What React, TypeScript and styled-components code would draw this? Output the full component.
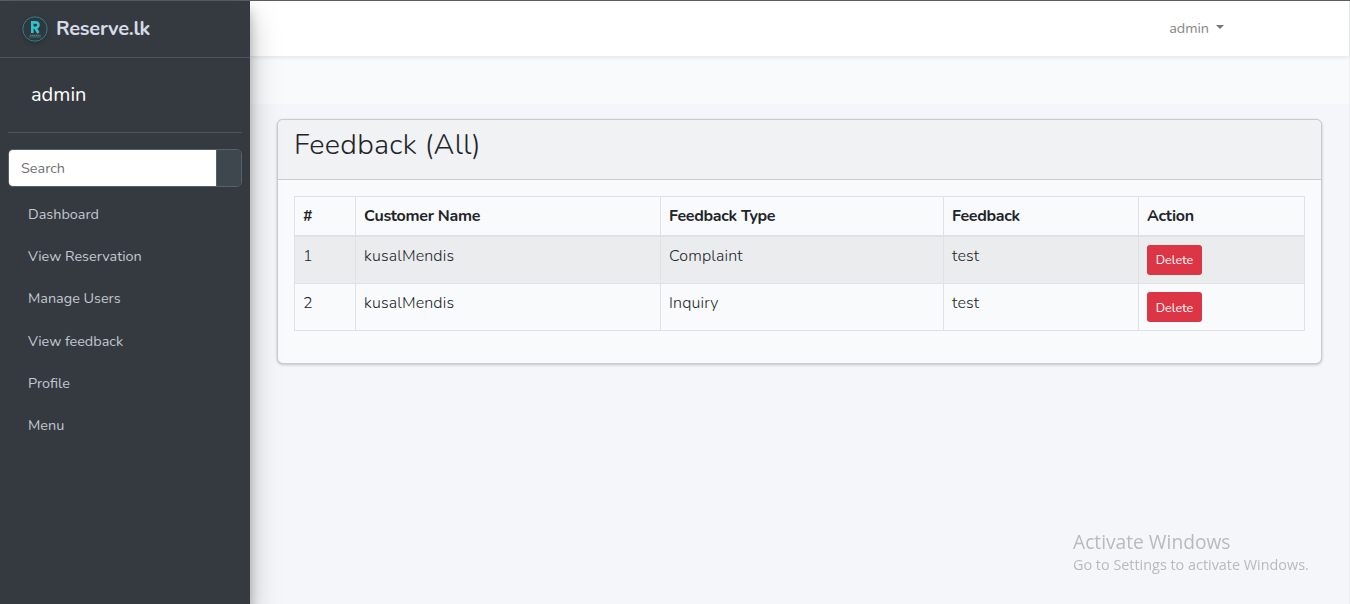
import React from "react";
import styled, { createGlobalStyle } from "styled-components";

const GlobalStyle = createGlobalStyle`
  *, *::before, *::after { box-sizing: border-box; }
  body {
    margin: 0;
    overflow: hidden;
    font-family: Nunito, Lato, "Open Sans", sans-serif;
    font-size: 16px;
    line-height: 24px;
    color: #212529;
    background: #f4f6f9;
  }
`;

const Page = styled.div`
  display: flex;
  height: 604px;
  border-top: 1px solid #5d5d5d;
`;

const Sidebar = styled.aside`
  position: relative;
  z-index: 2;
  flex: 0 0 250px;
  background: #353a40;
  box-shadow: 0 14px 28px rgba(0, 0, 0, 0.25), 0 10px 10px rgba(0, 0, 0, 0.22);
`;

const Brand = styled.div`
  display: flex;
  align-items: center;
  height: 57px;
  padding: 0 0 1px 22px;
  border-bottom: 1px solid #4d5359;
`;

const BrandName = styled.span`
  margin-left: 8px;
  font-size: 20px;
  font-weight: 700;
  letter-spacing: -0.25px;
  color: #d7dbe8;
`;

const Logo = styled.svg`
  width: 26px;
  height: 28px;
  filter: drop-shadow(0 2px 2px rgba(0, 0, 0, 0.2));
`;

const UserPanel = styled.div`
  margin: 0 8px 16px;
  padding: 22px 0 0 23px;
  height: 75px;
  border-bottom: 1px solid #4f555b;
  color: #fff;
  font-size: 20px;
  line-height: 30px;
`;

const SearchGroup = styled.div`
  display: flex;
  height: 38px;
  margin: 0 8px 6px;
  border: 1px solid #56606a;
  border-radius: 5px;
  overflow: hidden;
`;

const SearchInput = styled.input`
  width: 207px;
  padding: 0 12px 1px;
  border: 0;
  background: #fff;
  font: 400 14.4px/24px Nunito, Lato, sans-serif;
  &::placeholder { color: #6f7174; opacity: 1; }
`;

const SearchButton = styled.button`
  flex: 1;
  padding: 0;
  border: 0;
  border-left: 1px solid #56606a;
  background: #3f474e;
`;

const NavItem = styled.a`
  display: flex;
  align-items: center;
  height: 42.2px;
  padding-left: 28px;
  font-size: 14.4px;
  color: #c2c7d0;
`;

const Main = styled.main`
  flex: 1;
  min-width: 0;
  border-right: 1px solid #eceef1;
`;

const Navbar = styled.header`
  position: relative;
  display: flex;
  justify-content: flex-end;
  align-items: center;
  height: 55px;
  padding: 0 125px 2px 0;
  background: #fff;
  box-shadow: 0 2px 4px rgba(0, 0, 0, 0.075);
`;

const UserMenu = styled.span`
  display: flex;
  align-items: center;
  font-size: 14.4px;
  color: #868686;
  &::after {
    content: "";
    margin: -2px 0 0 7px;
    border: 4px solid transparent;
    border-top-color: #767676;
    border-bottom: 0;
  }
`;

const SubBar = styled.div`
  height: 48px;
  background: #f8fafc;
`;

const Card = styled.section`
  margin: 15px 27px 0;
  height: 245px;
  border: 1px solid #c9cbce;
  border-radius: 6px;
  background: #f8fafc;
  box-shadow: 0 1px 3px rgba(0, 0, 0, 0.2), 0 0 1px rgba(0, 0, 0, 0.125);
  overflow: hidden;
`;

const CardHeader = styled.div`
  height: 60px;
  padding: 7px 16px 0;
  border-bottom: 1px solid #c9cbce;
  background: #f1f2f4;
`;

const Title = styled.h1`
  margin: 0;
  font-size: 28.8px;
  line-height: 35px;
  font-weight: 300;
  letter-spacing: 0.3px;
`;

const Table = styled.table`
  width: 1011px;
  margin: 16px;
  table-layout: fixed;
  border-collapse: collapse;
`;

const HeadCell = styled.th<{ $width: number }>`
  width: ${(p) => p.$width}px;
  height: 39px;
  padding: 0 8px;
  border: 1px solid #dee2e6;
  border-bottom-width: 2px;
  text-align: left;
  font-weight: 700;
  letter-spacing: -0.28px;
`;

const Row = styled.tr<{ $striped: boolean }>`
  background: ${(p) => (p.$striped ? "#ebecee" : "transparent")};
`;

const Cell = styled.td`
  height: 47px;
  padding: 7px 8px 0;
  border: 1px solid #dee2e6;
  vertical-align: top;
  font-weight: 300;
  letter-spacing: 0.15px;
  ${Row}:first-child > & {
    height: 48px;
  }
`;

const DeleteButton = styled.button`
  display: block;
  width: 55px;
  height: 30px;
  margin-top: 1px;
  padding: 0;
  border: 0;
  border-radius: 3px;
  background: #dc3545;
  color: #fff;
  font: 400 12.6px/19px Nunito, Lato, sans-serif;
`;

const Watermark = styled.div`
  position: fixed;
  left: 1073px;
  top: 529px;
  z-index: 3;
  color: #b9babc;
  font-family: "Segoe UI", "Open Sans", sans-serif;
  white-space: nowrap;
`;

const WatermarkTitle = styled.div`
  font-size: 19.2px;
  line-height: 26px;
`;

const WatermarkText = styled.div`
  font-size: 14.4px;
  line-height: 20px;
`;

const navItems = ["Dashboard", "View Reservation", "Manage Users", "View feedback", "Profile", "Menu"];

const columns = [
  { label: "#", width: 61 },
  { label: "Customer Name", width: 305 },
  { label: "Feedback Type", width: 283 },
  { label: "Feedback", width: 195 },
  { label: "Action", width: 166 },
];

const feedback = [
  { id: 1, customer: "kusalMendis", type: "Complaint", text: "test" },
  { id: 2, customer: "kusalMendis", type: "Inquiry", text: "test" },
];

export default function App() {
  return (
    <>
      <GlobalStyle />
      <Page>
        <Sidebar>
          <Brand>
            <Logo viewBox="0 0 26 28">
              <circle cx="13" cy="14" r="12.2" fill="#30383e" stroke="#2c8288" strokeWidth="1" />
              <path d="M10.3 18V7.400h3.2c3.900 0 3.900 5.400 0 5.400h-3.2m3 0 3.100 5.200" fill="none" stroke="#2cc5cb" strokeWidth="2.6" />
              <path d="M8 20.500h10.500" stroke="#65757a" strokeWidth="1.3" strokeDasharray="1.4 .5" />
              <path d="M7 22h12" stroke="#28777c" strokeWidth="1" />
            </Logo>
            <BrandName>Reserve.lk</BrandName>
          </Brand>
          <UserPanel>admin</UserPanel>
          <SearchGroup>
            <SearchInput placeholder="Search" />
            <SearchButton aria-label="Search" />
          </SearchGroup>
          <nav>
            {navItems.map((item) => (
              <NavItem key={item}>{item}</NavItem>
            ))}
          </nav>
        </Sidebar>
        <Main>
          <Navbar>
            <UserMenu>admin</UserMenu>
          </Navbar>
          <SubBar />
          <Card>
            <CardHeader>
              <Title>Feedback (All)</Title>
            </CardHeader>
            <Table>
              <thead>
                <tr>
                  {columns.map((c) => (
                    <HeadCell key={c.label} $width={c.width}>{c.label}</HeadCell>
                  ))}
                </tr>
              </thead>
              <tbody>
                {feedback.map((f, i) => (
                  <Row key={f.id} $striped={i % 2 === 0}>
                    <Cell>{f.id}</Cell>
                    <Cell>{f.customer}</Cell>
                    <Cell>{f.type}</Cell>
                    <Cell>{f.text}</Cell>
                    <Cell>
                      <DeleteButton>Delete</DeleteButton>
                    </Cell>
                  </Row>
                ))}
              </tbody>
            </Table>
          </Card>
        </Main>
      </Page>
      <Watermark>
        <WatermarkTitle>Activate Windows</WatermarkTitle>
        <WatermarkText>Go to Settings to activate Windows.</WatermarkText>
      </Watermark>
    </>
  );
}
